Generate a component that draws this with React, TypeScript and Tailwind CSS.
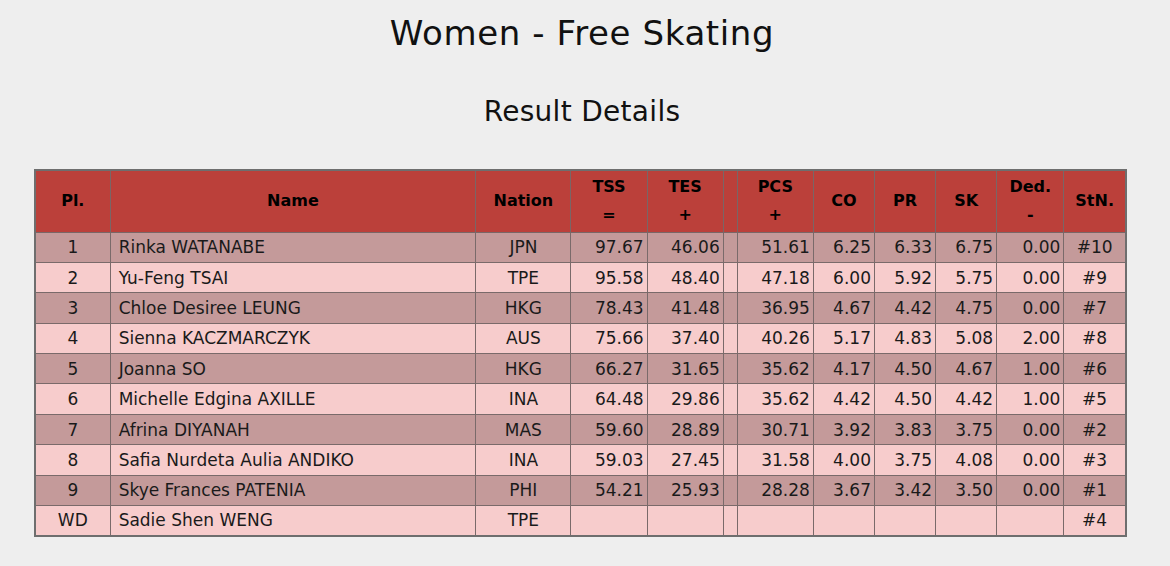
import React from "react";

type Row = {
  pl: string;
  name: string;
  nation: string;
  tss: string;
  tes: string;
  pcs: string;
  co: string;
  pr: string;
  sk: string;
  ded: string;
  stn: string;
};

const rows: Row[] = [
  { pl: "1", name: "Rinka WATANABE", nation: "JPN", tss: "97.67", tes: "46.06", pcs: "51.61", co: "6.25", pr: "6.33", sk: "6.75", ded: "0.00", stn: "#10" },
  { pl: "2", name: "Yu-Feng TSAI", nation: "TPE", tss: "95.58", tes: "48.40", pcs: "47.18", co: "6.00", pr: "5.92", sk: "5.75", ded: "0.00", stn: "#9" },
  { pl: "3", name: "Chloe Desiree LEUNG", nation: "HKG", tss: "78.43", tes: "41.48", pcs: "36.95", co: "4.67", pr: "4.42", sk: "4.75", ded: "0.00", stn: "#7" },
  { pl: "4", name: "Sienna KACZMARCZYK", nation: "AUS", tss: "75.66", tes: "37.40", pcs: "40.26", co: "5.17", pr: "4.83", sk: "5.08", ded: "2.00", stn: "#8" },
  { pl: "5", name: "Joanna SO", nation: "HKG", tss: "66.27", tes: "31.65", pcs: "35.62", co: "4.17", pr: "4.50", sk: "4.67", ded: "1.00", stn: "#6" },
  { pl: "6", name: "Michelle Edgina AXILLE", nation: "INA", tss: "64.48", tes: "29.86", pcs: "35.62", co: "4.42", pr: "4.50", sk: "4.42", ded: "1.00", stn: "#5" },
  { pl: "7", name: "Afrina DIYANAH", nation: "MAS", tss: "59.60", tes: "28.89", pcs: "30.71", co: "3.92", pr: "3.83", sk: "3.75", ded: "0.00", stn: "#2" },
  { pl: "8", name: "Safia Nurdeta Aulia ANDIKO", nation: "INA", tss: "59.03", tes: "27.45", pcs: "31.58", co: "4.00", pr: "3.75", sk: "4.08", ded: "0.00", stn: "#3" },
  { pl: "9", name: "Skye Frances PATENIA", nation: "PHI", tss: "54.21", tes: "25.93", pcs: "28.28", co: "3.67", pr: "3.42", sk: "3.50", ded: "0.00", stn: "#1" },
  { pl: "WD", name: "Sadie Shen WENG", nation: "TPE", tss: "", tes: "", pcs: "", co: "", pr: "", sk: "", ded: "", stn: "#4" },
];

const th = "border border-[#7a6666] bg-[#bb403a] text-black font-bold text-[16px] leading-[28px] align-middle p-0";
const td = "border border-[#7a6a6a] h-[30.4px] p-0 text-[17px] leading-[20px] align-middle";
const num = td + " text-right pr-[3px]";

export default function App() {
  return (
    <div
      className="w-[1170px] h-[566px] bg-[#eeeeee] text-[#1a1a1a] overflow-hidden"
      style={{ fontFamily: '"DejaVu Sans", Verdana, sans-serif' }}
    >
      <h1 className="text-center text-[34px] leading-[40px] pt-[13px] text-[#111] font-normal tracking-[0.6px] pr-[6px]">
        Women - Free Skating
      </h1>
      <h2 className="text-center text-[28px] leading-[34px] mt-[42px] text-[#111] font-normal tracking-[0.3px] pr-[6px]">
        Result Details
      </h2>
      <div className="pl-[34px] pt-[40px]">
        <table className="border-collapse border-2 border-[#6e6e6e] table-fixed w-[1093px]">
          <colgroup>
            <col className="w-[75px]" />
            <col className="w-[365px]" />
            <col className="w-[95px]" />
            <col className="w-[76px]" />
            <col className="w-[76px]" />
            <col className="w-[14px]" />
            <col className="w-[76px]" />
            <col className="w-[61px]" />
            <col className="w-[61px]" />
            <col className="w-[61px]" />
            <col className="w-[67px]" />
            <col className="w-[62px]" />
          </colgroup>
          <thead>
            <tr className="h-[62px]">
              <th className={th}>Pl.</th>
              <th className={th}>Name</th>
              <th className={th}>Nation</th>
              <th className={th}>TSS<br />=</th>
              <th className={th}>TES<br />+</th>
              <th className={th}></th>
              <th className={th}>PCS<br />+</th>
              <th className={th}>CO</th>
              <th className={th}>PR</th>
              <th className={th}>SK</th>
              <th className={th}>Ded.<br />-</th>
              <th className={th}>StN.</th>
            </tr>
          </thead>
          <tbody>
            {rows.map((r, i) => (
              <tr key={r.pl} className={i % 2 === 0 ? "bg-[#c49a9a]" : "bg-[#f7cccc]"}>
                <td className={td + " text-center"}>{r.pl}</td>
                <td className={td + " text-left pl-[8px]"}>{r.name}</td>
                <td className={td + " text-center"}>{r.nation}</td>
                <td className={num}>{r.tss}</td>
                <td className={num}>{r.tes}</td>
                <td className={td}></td>
                <td className={num}>{r.pcs}</td>
                <td className={num}>{r.co}</td>
                <td className={num}>{r.pr}</td>
                <td className={num}>{r.sk}</td>
                <td className={num}>{r.ded}</td>
                <td className={td + " text-center"}>{r.stn}</td>
              </tr>
            ))}
          </tbody>
        </table>
      </div>
    </div>
  );
}
